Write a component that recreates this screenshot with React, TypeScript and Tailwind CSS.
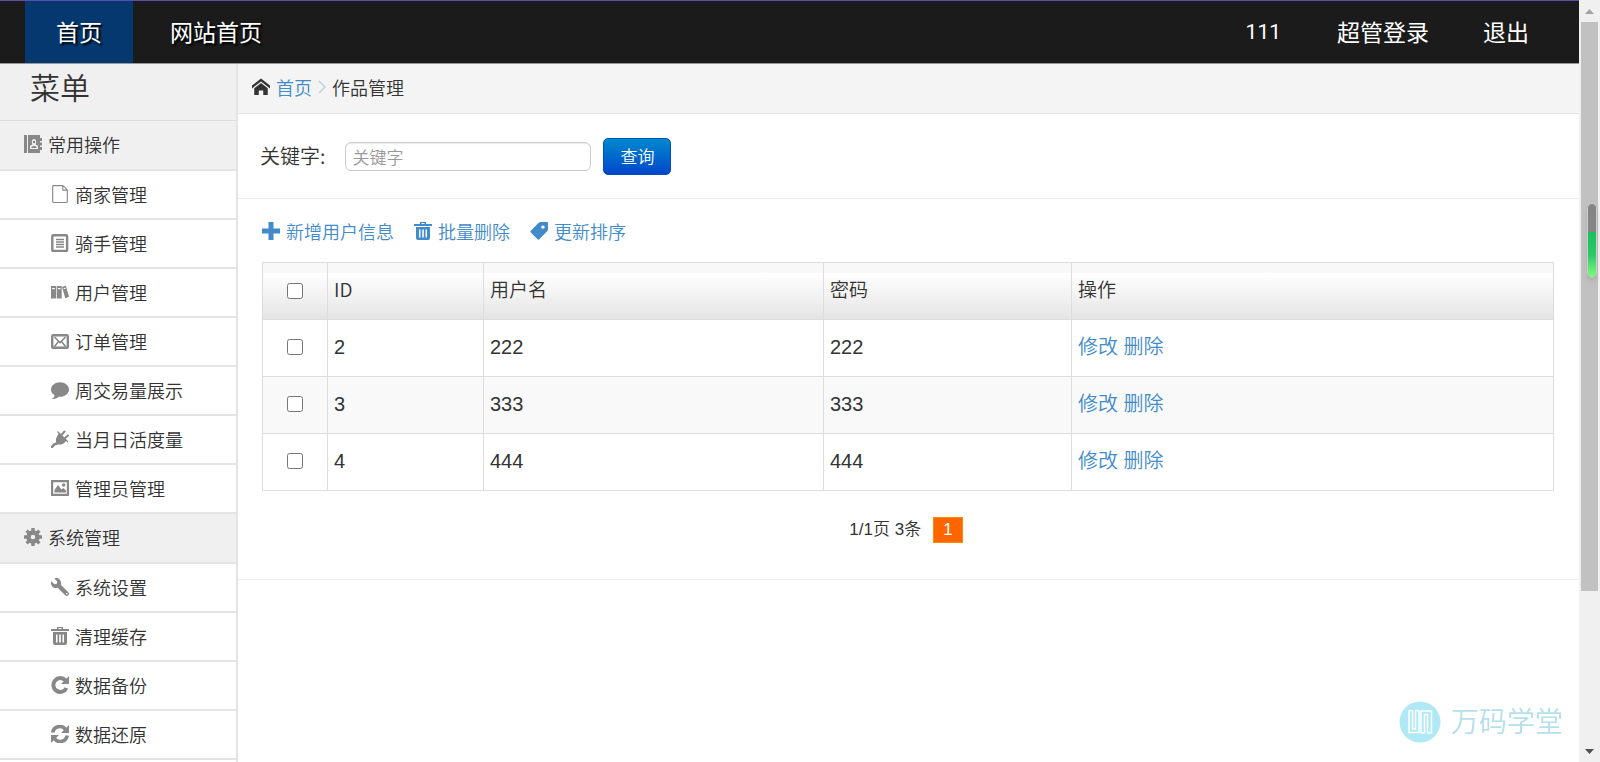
import React from 'react';
import { ImHome, ImFileEmpty, ImBubble, ImPriceTag } from 'react-icons/im';
import { FaWrench } from 'react-icons/fa';

function PlusIcon() {
  return (
    <svg viewBox="0 0 18 18" width="18" height="18" fill="currentColor">
      <path d="M6.500 0h5v6.500H18v5h-6.500V18h-5v-6.500H0v-5h6.500z" />
    </svg>
  );
}

function TrashIcon() {
  return (
    <svg viewBox="0 0 18 18" width="18" height="18" fill="currentColor">
      <path fillRule="evenodd" d="M6 0h6v2h6v2H0V2h6zM7.500 1v1h3V1zM2 5h14v11a2 2 0 0 1-2 2H4a2 2 0 0 1-2-2zM5 7.500v8h1.500v-8zM8.200 7.500v8h1.600v-8zM11.500 7.500v8H13v-8z" />
    </svg>
  );
}

function AddressIcon() {
  return (
    <svg viewBox="0 0 18 18" width="18" height="18" fill="currentColor">
      <path fillRule="evenodd" d="M0 0h3v18H0zM4 0h12v3h2v3h-2v1.500h2v3h-2V12h2v3h-2v3H4zM6 14h8v-2.500c0-1-1-1.500-2.500-2 1.200-2 .8-5.500-1.500-5.500S7.300 7.500 8.500 9.500C7 10 6 10.500 6 11.500z" />
      <circle cx="10" cy="7" r="1.200" />
      <path d="M7.500 13v-1c1-1.200 4-1.200 5 0v1z" />
    </svg>
  );
}

function BooksIcon() {
  return (
    <svg viewBox="0 0 18 18" width="18" height="18" fill="currentColor">
      <path fillRule="evenodd" d="M0 3h5v12.500H0zM1.200 5v1.200h2.600V5zM5.700 3h5v12.500h-5zM6.900 5v1.200h2.600V5zM11 4l3.800-1.400L18 13.800l-3.700 1.500zM12.600 5.200l.3 1.100 1.800-.6-.3-1.100z" />
    </svg>
  );
}

function GearIcon() {
  return (
    <svg viewBox="0 0 18 18" width="18" height="18" fill="none" stroke="currentColor">
      <circle cx="9" cy="9" r="4.500" strokeWidth="4.500" />
      <path d="M9 0v4M9 14v4M0 9h4M14 9h4M2.600 2.600l3 3M12.400 12.400l3 3M2.600 15.400l3-3M12.400 5.600l3-3" strokeWidth="3.400" />
    </svg>
  );
}

function ListIcon() {
  return (
    <svg viewBox="0 0 18 18" width="18" height="18" fill="none" stroke="currentColor">
      <rect x="1.300" y="1.300" width="14.800" height="15.600" rx="1" strokeWidth="2.400" />
      <path d="M5 5.500h8M5 8h8M5 10.500h8M5 13h8" strokeWidth="1.400" />
    </svg>
  );
}

function MailIcon() {
  return (
    <svg viewBox="0 0 18 18" width="18" height="18" fill="none" stroke="currentColor">
      <rect x="1.200" y="3.200" width="15.600" height="12.600" rx="1" strokeWidth="2.400" />
      <path d="M3.500 5l5.500 5.500L14.500 5M3.500 14.500l4-5M14.500 14.500l-4-5" strokeWidth="1.600" />
    </svg>
  );
}

function PlugIcon() {
  return (
    <svg viewBox="0 0 18 18" width="18" height="18" fill="none" stroke="currentColor" strokeLinecap="round">
      <path d="M8 3l7.500 7.500-2.500 2.500c-2 2-5.500 2-7 .5s-1.500-5 0-7z" fill="currentColor" stroke="none" />
      <path d="M10.500 5l3-3.500M13.500 8.500L17 5.500" strokeWidth="2" />
      <path d="M1 17l2-2.500 3-1" strokeWidth="2.600" />
      <path d="M7 2l9.500 9.500" strokeWidth="1.200" />
    </svg>
  );
}

function ImageIcon() {
  return (
    <svg viewBox="0 0 18 18" width="18" height="18" fill="currentColor">
      <path fillRule="evenodd" d="M0 1h18v16H0zM2.200 3.200v11.600h13.600V3.200z" />
      <path d="M3.500 13.500V11L7 6l3.500 4.500L12.500 9l2.500 2.500v2z" />
      <circle cx="12.700" cy="6" r="1.700" />
    </svg>
  );
}

function RedoIcon() {
  return (
    <svg viewBox="0 0 18 18" width="18" height="18">
      <path d="M14.500 4.500A6.900 6.900 0 1 0 15.500 12" fill="none" stroke="currentColor" strokeWidth="4" />
      <path d="M18 0v8h-8z" fill="currentColor" />
    </svg>
  );
}

function SyncIcon() {
  return (
    <svg viewBox="0 0 18 18" width="18" height="18">
      <path d="M1.800 7.500A7 7 0 0 1 14.500 4.500M16.200 10.500A7 7 0 0 1 3.500 13.500" fill="none" stroke="currentColor" strokeWidth="3.600" />
      <path d="M18 0v8h-8zM0 18v-8h8z" fill="currentColor" />
    </svg>
  );
}

const common = [
  { label: '商家管理', icon: <ImFileEmpty /> },
  { label: '骑手管理', icon: <ListIcon /> },
  { label: '用户管理', icon: <BooksIcon /> },
  { label: '订单管理', icon: <MailIcon /> },
  { label: '周交易量展示', icon: <ImBubble /> },
  { label: '当月日活度量', icon: <PlugIcon /> },
  { label: '管理员管理', icon: <ImageIcon /> },
];

const system = [
  { label: '系统设置', icon: <FaWrench className="-scale-x-100" /> },
  { label: '清理缓存', icon: <TrashIcon /> },
  { label: '数据备份', icon: <RedoIcon /> },
  { label: '数据还原', icon: <SyncIcon /> },
];

const rows = [
  { id: 2, name: '222', pwd: '222' },
  { id: 3, name: '333', pwd: '333' },
  { id: 4, name: '444', pwd: '444' },
];

type Item = { label: string; icon: React.ReactNode };

function MenuGroup({ title, icon, items }: { title: string; icon: React.ReactNode; items: Item[] }) {
  return (
    <div>
      <h3 className="flex h-[50px] items-center gap-1.5 border-b-2 border-[#e4e4e4] bg-[#f0f0f0] pb-0.5 pl-6 font-[350]">
        <span className="text-[#888]">{icon}</span>
        {title}
      </h3>
      <ul>
        {items.map((item) => (
          <li key={item.label}>
            <a href="#" className="flex h-[49px] items-center gap-1.5 border-b-2 border-[#e4e4e4] pb-0.5 pl-[51px]">
              <span className="text-[#888]">{item.icon}</span>
              {item.label}
            </a>
          </li>
        ))}
      </ul>
    </div>
  );
}

function Header() {
  return (
    <header className="flex h-16 items-stretch justify-between border-t border-b border-t-[#5b4db0] border-b-[#999] bg-[#1b1b1b] pr-[22px] pl-[25px] text-[23px] leading-[60px] font-normal text-white">
      <nav className="flex gap-1">
        <a href="#" className="bg-[#04386e] px-[31px] [text-shadow:2px_2px_2px_#000]">首页</a>
        <a href="#" className="px-[33px] [text-shadow:2px_2px_2px_#000]">网站首页</a>
      </nav>
      <nav className="flex">
        <a href="#" className="px-7 font-[Roboto,sans-serif] text-[21px] leading-[62px]">111</a>
        <a href="#" className="px-7">超管登录</a>
        <a href="#" className="pr-7 pl-[26px]">退出</a>
      </nav>
    </header>
  );
}

function UserTable() {
  return (
    <table className="w-full table-fixed border-collapse text-left font-['Liberation_Sans','Noto_Sans_CJK_SC',sans-serif] text-xl [&_td]:border [&_td]:border-[#ddd] [&_td]:px-1.5 [&_td]:pb-0.5 [&_th]:border [&_th]:border-[#ddd] [&_th]:px-1.5 [&_th]:pb-1">
      <colgroup>
        <col className="w-[65px]" />
        <col className="w-[156px]" />
        <col className="w-[340px]" />
        <col className="w-[248px]" />
        <col />
      </colgroup>
      <thead>
        <tr className="h-[57px] bg-[linear-gradient(#f8f8f8_10px,#fff_10px,#e4e4e4)] font-['Noto_Sans_CJK_SC',sans-serif] text-[19px]">
          <th>
            <input type="checkbox" aria-label="全选" className="mx-auto mt-1 block size-4" />
          </th>
          <th className="font-[350]">ID</th>
          <th className="font-[350]">用户名</th>
          <th className="font-[350]">密码</th>
          <th className="font-[350]">操作</th>
        </tr>
      </thead>
      <tbody>
        {rows.map((row) => (
          <tr key={row.id} className="h-[57px] even:bg-[#f9f9f9]">
            <td>
              <input type="checkbox" aria-label={`选择 ${row.id}`} className="mx-auto block size-4" />
            </td>
            <td>{row.id}</td>
            <td>{row.name}</td>
            <td>{row.pwd}</td>
            <td className="text-[#428bca]">
              <a href="#">修改</a> <a href="#">删除</a>
            </td>
          </tr>
        ))}
      </tbody>
    </table>
  );
}

function Watermark() {
  return (
    <div className="fixed right-[37px] bottom-[17px] flex items-center gap-2.5 text-[28px] leading-[42px] text-[#b4e0ec]">
      <svg viewBox="0 0 42 42" width="42" height="42">
        <circle cx="21" cy="21" r="20.500" fill="#b0e8f5" />
        <path d="M10 9.500v22h10v-22M13.500 9.500v18.500h3v-18.500M22 32v-22h10.500v22M25.500 32v-18.500h3v18.500M9.500 9.500h4M16 9.500h4M22 32h3.500M28.500 32h4" fill="none" stroke="#fff" strokeWidth="1.500" />
      </svg>
      <span className="pb-1">万码学堂</span>
    </div>
  );
}

function ScrollRail() {
  return (
    <div className="relative flex w-[21px] shrink-0 flex-col items-center bg-[#f0f0f0]">
      <svg viewBox="0 0 21 22" width="21" height="22">
        <path d="M6 14l4.500-5 4.500 5z" fill="#a3a3a3" />
      </svg>
      <div className="h-[569px] w-[17px] shrink-0 bg-[#c1c1c1]" />
      <svg viewBox="0 0 21 22" width="21" height="22" className="mt-auto">
        <path d="M6 9l4.500 5 4.500-5z" fill="#505050" />
      </svg>
      <div className="absolute top-[203px] right-[3px] h-[75px] w-2.5 overflow-hidden rounded-full border border-[#ccc] bg-[#858585] shadow-md">
        <div className="mt-7 h-[45px] bg-linear-to-b from-[#18c060] via-[#28c865] via-50% to-[#7cfa80]" />
      </div>
    </div>
  );
}

export default function App() {
  return (
    <div className="flex h-screen overflow-hidden bg-white font-['Noto_Sans_CJK_SC',sans-serif] text-lg font-[350] text-[#333]">
      <div className="flex min-w-0 flex-1 flex-col">
        <Header />
        <div className="flex min-h-0 flex-1">
          <aside className="w-[238px] shrink-0 border-r-2 border-[#e4e4e4]">
            <h2 className="h-[57px] border-b border-[#ddd] bg-[#f0f0f0] pl-[30px] text-3xl leading-11 font-[350]">菜单</h2>
            <MenuGroup title="常用操作" icon={<AddressIcon />} items={common} />
            <MenuGroup title="系统管理" icon={<GearIcon />} items={system} />
          </aside>
          <main className="min-w-0 flex-1">
            <div className="flex h-[50px] items-center border-b border-[#e5e5e5] bg-[#f4f4f4] pb-1 pl-3.5">
              <ImHome className="mr-1.5" />
              <a href="#" className="text-[#428bca]">首页</a>
              <svg viewBox="0 0 20 16" width="20" height="16" fill="none" stroke="#c5d0dc" strokeWidth="1.500">
                <path d="M7 2l6 6-6 6" />
              </svg>
              <span>作品管理</span>
            </div>
            <form className="flex h-[85px] items-center border-b border-[#eee] pl-[22px]">
              <label htmlFor="keyword" className="mr-5 text-xl">关键字:</label>
              <input
                id="keyword"
                type="text"
                placeholder="关键字"
                className="h-[29px] w-[246px] rounded-md border border-[#ccc] px-1.5 text-[17px] shadow-[inset_0_1px_1px_rgba(0,0,0,0.08)] placeholder:text-[#999]"
              />
              <button
                type="button"
                className="ml-3 h-[37px] rounded-[5px] border border-[#0050b8] bg-linear-to-b from-[#0088cc] to-[#0044cc] px-4 text-[17px] text-white"
              >
                查询
              </button>
            </form>
            <section className="border-b border-[#eee] pr-[25px] pb-9 pl-6">
              <div className="flex h-[63px] items-center gap-5 text-[#428bca]">
                <a href="#" className="flex items-center gap-1.5"><PlusIcon />新增用户信息</a>
                <a href="#" className="flex items-center gap-1.5"><TrashIcon />批量删除</a>
                <a href="#" className="flex items-center gap-1.5"><ImPriceTag />更新排序</a>
              </div>
              <UserTable />
              <div className="mt-[26px] flex items-center justify-center gap-3 pr-1 font-['Liberation_Sans','Noto_Sans_CJK_SC',sans-serif] text-[17px]">
                <span>1/1页 3条</span>
                <span className="border border-[#ff8a00] bg-[#ff6600] px-[9px] leading-6 text-white">1</span>
              </div>
            </section>
          </main>
        </div>
      </div>
      <ScrollRail />
      <Watermark />
    </div>
  );
}
